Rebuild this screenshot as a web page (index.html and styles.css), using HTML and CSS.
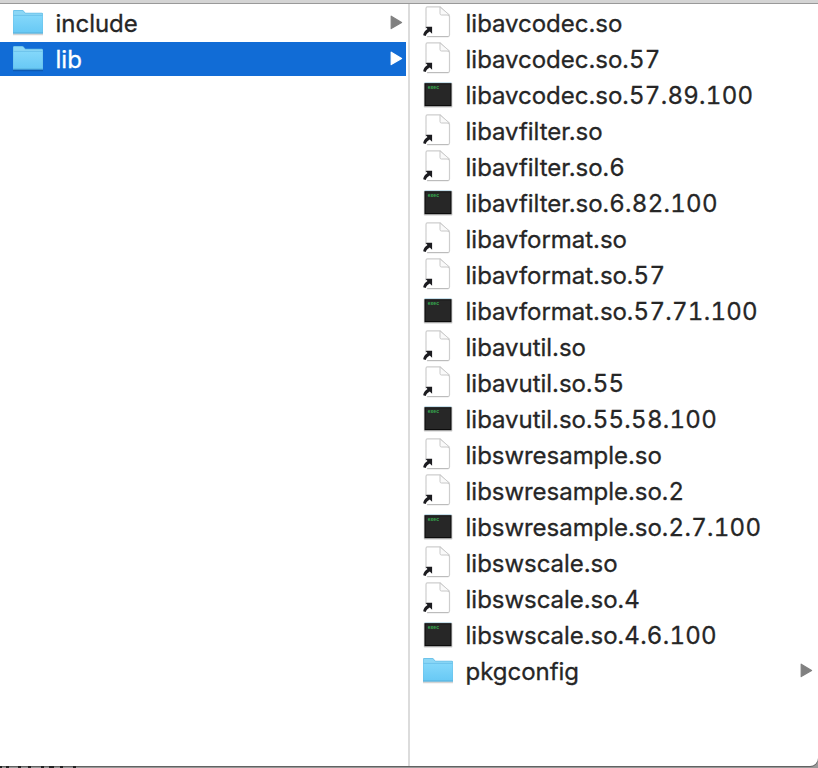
FILE: index.html
```
<!DOCTYPE html>
<html lang="en">
<head>
<meta charset="utf-8">
<title>lib</title>
<link rel="stylesheet" href="styles.css">
</head>
<body>
<svg class="symbols" aria-hidden="true">
  <defs>
    <linearGradient id="folderFill" x1="0" y1="0" x2="0" y2="1"><stop offset="0" stop-color="#83d7fa"/><stop offset="1" stop-color="#68c9f5"/></linearGradient>
    <symbol id="folder" viewBox="0 0 34 34">
      <path d="M2 28.5h30" stroke="#000" stroke-opacity=".17" stroke-width="1.5"/>
      <path d="M2 5.2Q2 4 3.2 4h8.1q.8 0 1.4.7l1.2 1.5q.5.6 1.3.6h15.6q1.2 0 1.2 1.2v19H2z" fill="#65bde6"/>
      <path d="M2.5 5.4q0-.7.8-.7H11q.8 0 1.3.6l1.5 1.6q.4.5 1.2.5h15.6q.9 0 .9.9V10h-29z" fill="#8bd7f6"/>
      <path d="M2.4 9.8h29.2v16.8H2.4z" fill="url(#folderFill)"/>
      <path d="M2.4 9.4h29.2" stroke="#65bfe8" stroke-width=".8"/>
      <path d="M2 27.2h30" stroke="#4faad6" stroke-width="1"/>
    </symbol>
    <symbol id="alias" viewBox="0 0 34 34">
      <path d="M5 2.4q0-1.6 1.4-1.6H19L28.5 10.3v18.7q0 1.5-1.5 1.5H6.5q-1.5 0-1.5-1.5z" fill="#fff" stroke="#cecece" stroke-width="1.2"/>
      <path d="M6 30.7h21.5" stroke="#b8b8b8" stroke-width="1"/>
      <path d="M19 .9v6.6q0 1.5 1.5 1.5h8z" fill="#fafafa" stroke="#c8c8c8"/>
      <path d="M3.5 20.2h9v8.6l-3-2-4 4.2H1.4v-6l4-3z" fill="#fff"/>
      <path d="M4.3 20.7h6.8v7l-2.3-2.2C6.6 26.7 5.2 28.4 4.7 30L2.2 29.3C2.4 26.6 4 24.4 6.5 22.9z" fill="#1c1c20"/>
    </symbol>
    <symbol id="exec" viewBox="0 0 34 34">
      <rect x="2.8" y="5" width="28.6" height="24.4" rx=".7" fill="#a9a9a9" opacity=".6"/>
      <path d="M3.5 4.7h27" stroke="#b9d8e6"/>
      <rect x="3.5" y="5.2" width="27" height="23" fill="#080808"/>
      <rect x="4.5" y="6.2" width="25" height="21" fill="#272727"/>
      <text x="6.7" y="11.4" class="exec-label" textLength="11.3" lengthAdjust="spacingAndGlyphs">exec</text>
    </symbol>
    <symbol id="arrow" viewBox="0 0 13 15"><path d="M1.2 1.2 11.6 7.4 1.2 13.6z" fill="currentColor" stroke="currentColor" stroke-width="1.2" stroke-linejoin="round"/></symbol>
  </defs>
</svg>
<div class="backdrop">
  <main class="browser">
    <ul class="column parent">
      <li class="row"><svg class="icon"><use href="#folder"/></svg><span class="name">include</span><svg class="arrow"><use href="#arrow"/></svg></li>
      <li class="row selected"><svg class="icon"><use href="#folder"/></svg><span class="name">lib</span><svg class="arrow"><use href="#arrow"/></svg></li>
    </ul>
    <ul class="column children">
      <li class="row"><svg class="icon"><use href="#alias"/></svg><span class="name">libavcodec.so</span></li>
      <li class="row"><svg class="icon"><use href="#alias"/></svg><span class="name">libavcodec.so<span class="version">.57</span></span></li>
      <li class="row"><svg class="icon"><use href="#exec"/></svg><span class="name">libavcodec.so<span class="version">.57.89.100</span></span></li>
      <li class="row"><svg class="icon"><use href="#alias"/></svg><span class="name">libavfilter.so</span></li>
      <li class="row"><svg class="icon"><use href="#alias"/></svg><span class="name">libavfilter.so<span class="version">.6</span></span></li>
      <li class="row"><svg class="icon"><use href="#exec"/></svg><span class="name">libavfilter.so<span class="version">.6.82.100</span></span></li>
      <li class="row"><svg class="icon"><use href="#alias"/></svg><span class="name">libavformat.so</span></li>
      <li class="row"><svg class="icon"><use href="#alias"/></svg><span class="name">libavformat.so<span class="version">.57</span></span></li>
      <li class="row"><svg class="icon"><use href="#exec"/></svg><span class="name">libavformat.so<span class="version">.57.71.100</span></span></li>
      <li class="row"><svg class="icon"><use href="#alias"/></svg><span class="name">libavutil.so</span></li>
      <li class="row"><svg class="icon"><use href="#alias"/></svg><span class="name">libavutil.so<span class="version">.55</span></span></li>
      <li class="row"><svg class="icon"><use href="#exec"/></svg><span class="name">libavutil.so<span class="version">.55.58.100</span></span></li>
      <li class="row"><svg class="icon"><use href="#alias"/></svg><span class="name">libswresample.so</span></li>
      <li class="row"><svg class="icon"><use href="#alias"/></svg><span class="name">libswresample.so<span class="version">.2</span></span></li>
      <li class="row"><svg class="icon"><use href="#exec"/></svg><span class="name">libswresample.so<span class="version">.2.7.100</span></span></li>
      <li class="row"><svg class="icon"><use href="#alias"/></svg><span class="name">libswscale.so</span></li>
      <li class="row"><svg class="icon"><use href="#alias"/></svg><span class="name">libswscale.so<span class="version">.4</span></span></li>
      <li class="row"><svg class="icon"><use href="#exec"/></svg><span class="name">libswscale.so<span class="version">.4.6.100</span></span></li>
      <li class="row"><svg class="icon"><use href="#folder"/></svg><span class="name">pkgconfig</span><svg class="arrow"><use href="#arrow"/></svg></li>
    </ul>
  </main>
  <svg class="underlay" viewBox="0 0 818 2"><path d="M0 1h2M6 1h3M18 1h3M28 1h3M41 1h3M49 1h5M60 1h3M73 1h3" stroke="#222" stroke-width="2"/></svg>
</div>
</body>
</html>
```

FILE: styles.css
```
* { box-sizing: border-box; }
body { margin: 0; overflow: hidden; }
.symbols { position: absolute; width: 0; height: 0; }
.backdrop {
  height: 768px;
  display: flex;
  flex-direction: column;
  background: linear-gradient(#d4d4d4 0 3px, #999 3px 4px, #999 4px);
  padding-top: 4px;
}
.browser {
  height: 762px;
  display: flex;
  background: #fff;
  border-bottom-right-radius: 8px;
  box-shadow: 0 1px 0 #626262;
}
.underlay { display: block; width: 818px; height: 2px; position: relative; }
.column { list-style: none; margin: 0; padding: 2px 0 0; }
.parent { width: 410px; border-right: 2px solid #dcdcdc; padding-right: 2px; }
.children { flex: 1; }
.row {
  height: 34px;
  margin-bottom: 2px;
  padding: 0 3px 0 11px;
  display: flex;
  align-items: center;
  color: #262626;
  font: 24px/34px Inter, "Liberation Sans", sans-serif;
}
.children .row { padding-right: 5px; }
.selected { background: #116cd6; color: #fff; }
.icon { width: 34px; height: 34px; flex: none; }
.name {
  margin-left: 10.6px;
  padding-top: 2px;
  flex: 1;
  white-space: nowrap;
  letter-spacing: -0.04px;
  -webkit-text-stroke: 0.3px currentColor;
}
.version { font-variant-numeric: tabular-nums; letter-spacing: 0.28px; }
.arrow { width: 13px; height: 15px; margin-top: -2px; color: #808080; }
.selected .arrow { color: #fff; }
.exec-label { font: bold 5px "Liberation Mono", monospace; fill: #37b454; }
```
